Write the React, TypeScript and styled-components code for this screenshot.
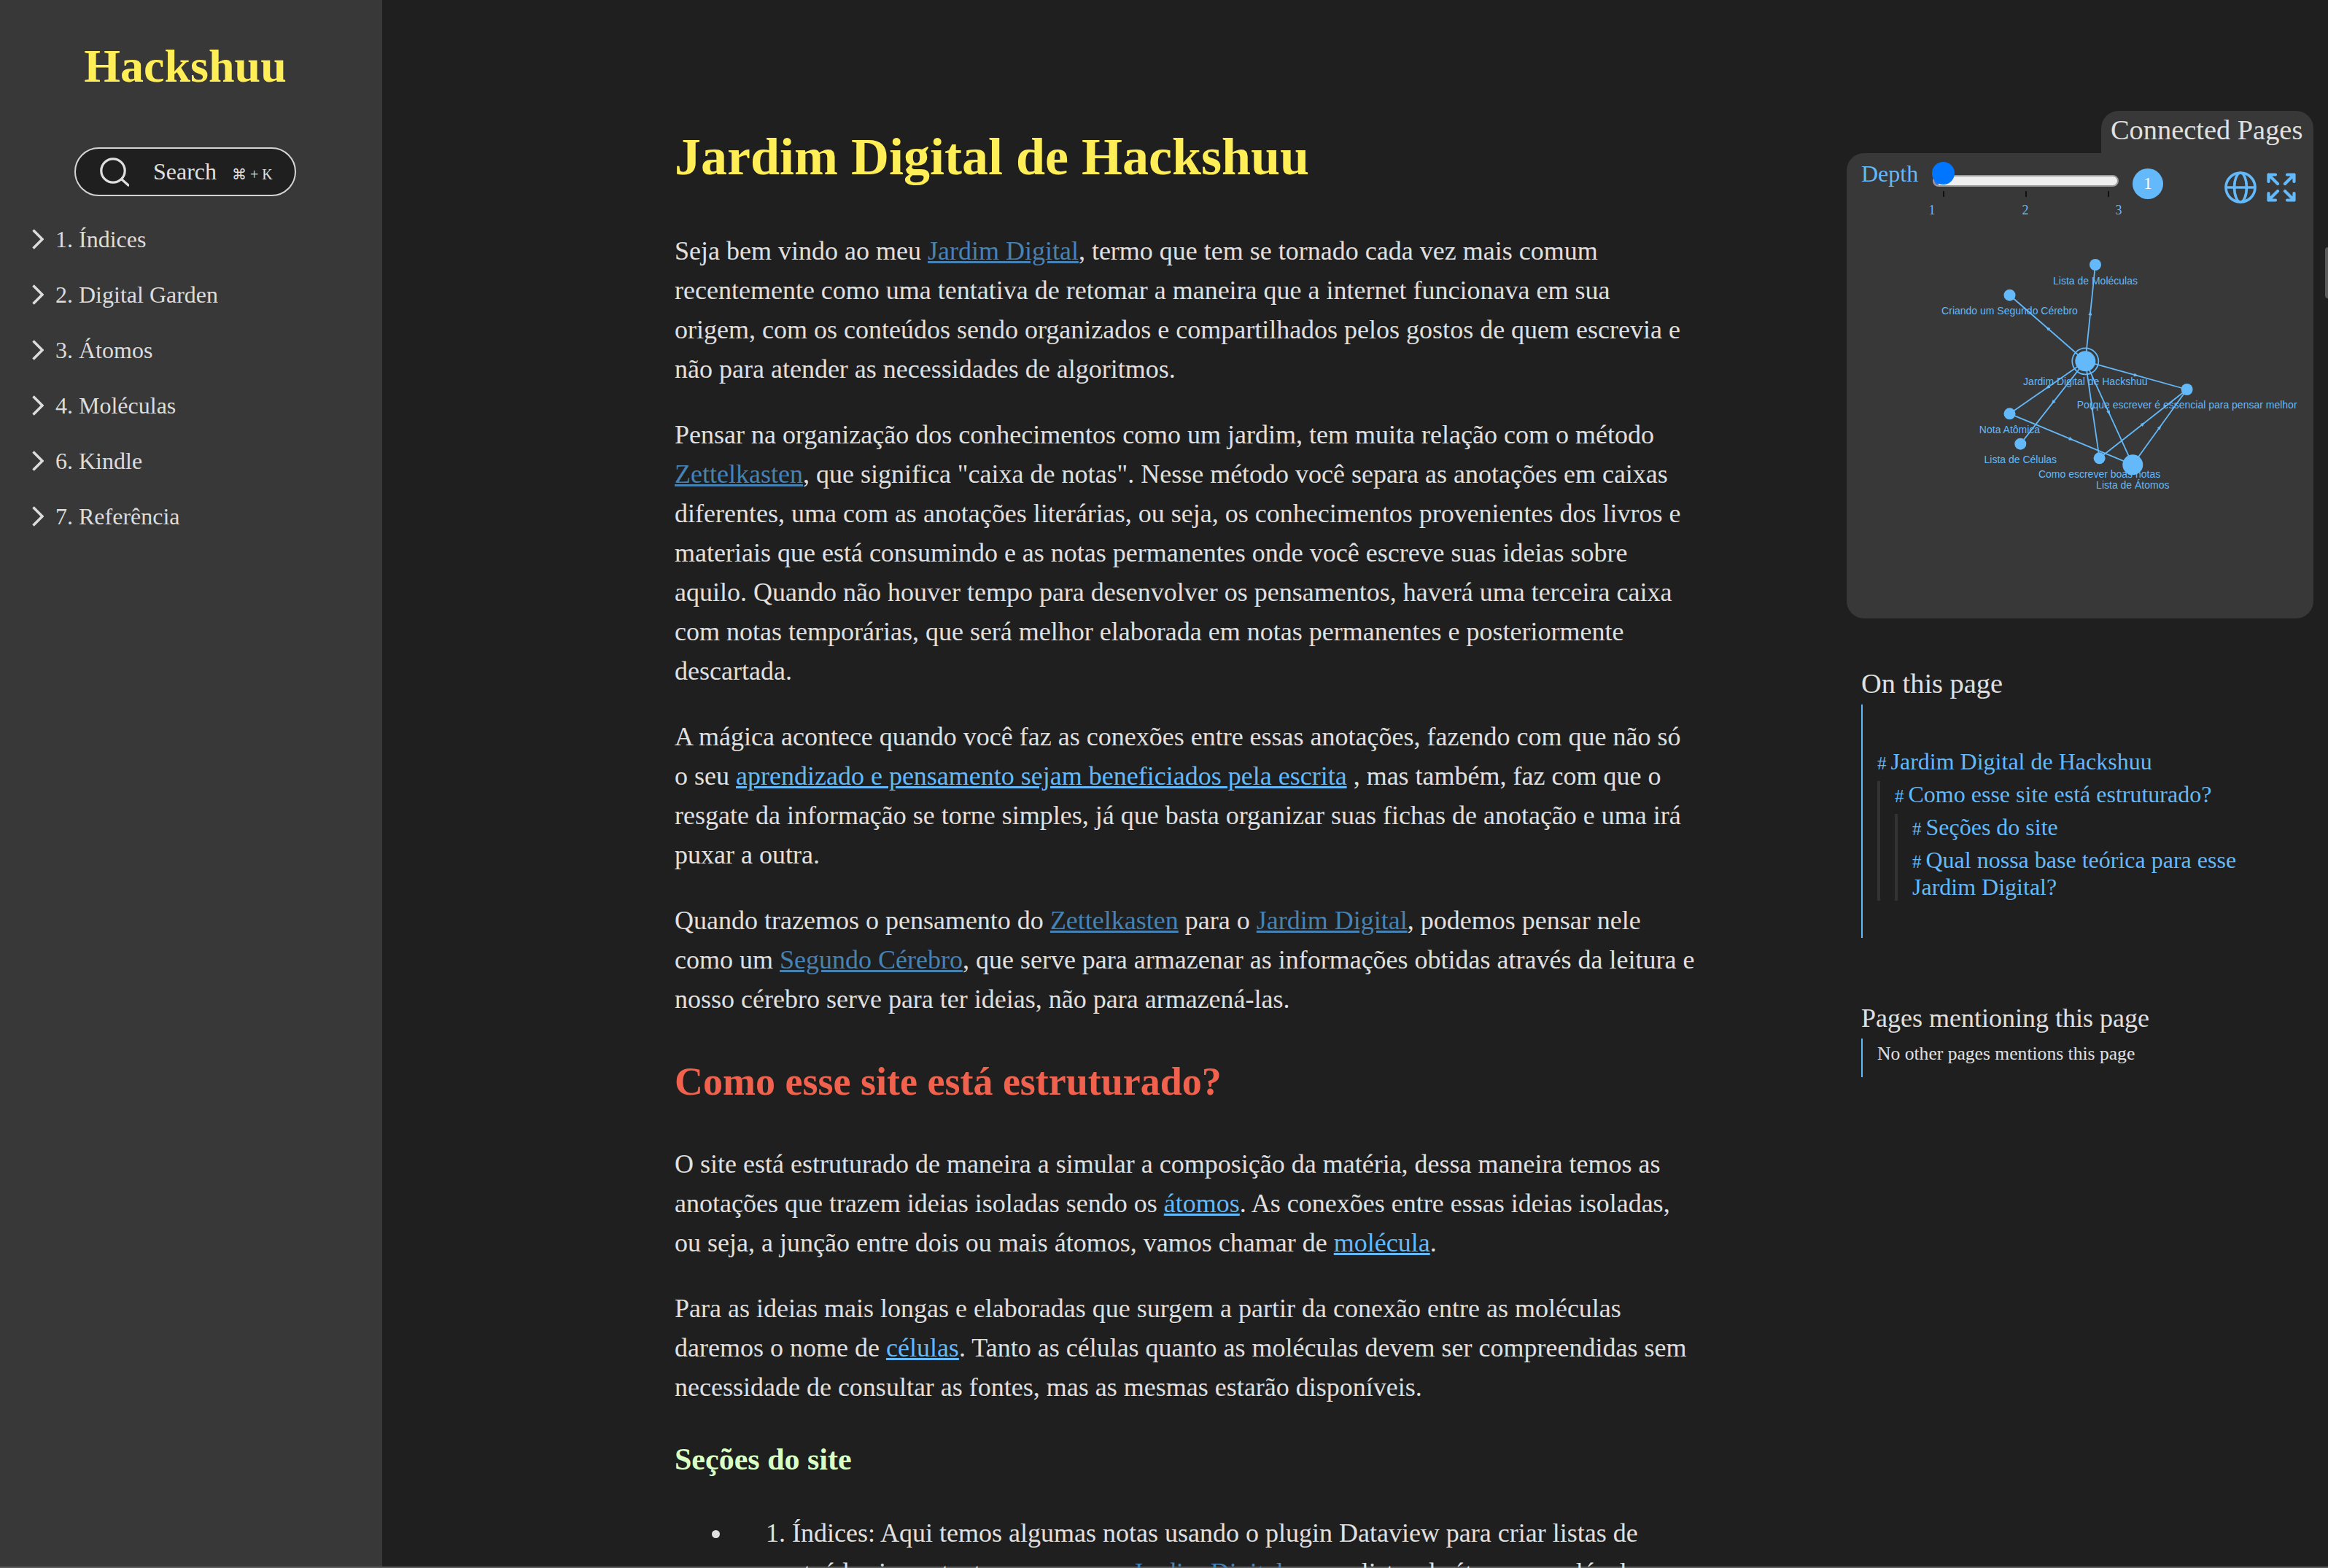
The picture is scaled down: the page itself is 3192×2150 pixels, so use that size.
import React from "react";
import styled, { createGlobalStyle } from "styled-components";

const Global = createGlobalStyle`
  html, body { margin: 0; padding: 0; height: 2150px; overflow: hidden; background: #1f1f1f; }
  * { box-sizing: border-box; }
  body { font-family: "Liberation Serif", "Times New Roman", serif; color: #e0e0e0; }
`;

const Page = styled.div`
  display: flex;
  height: 2148px;
  background: #1f1f1f;
`;

const BottomEdge = styled.div`
  height: 2px;
  background: #5c5c5c;
`;

const Sidebar = styled.aside`
  flex: 0 0 524px;
  background: #383838;
  padding-top: 54px;
`;

const Brand = styled.h1`
  margin: 0 16px 0 0;
  font-size: 64px;
  line-height: 74px;
  font-weight: 700;
  color: #ffee55;
  text-align: center;
`;

const SearchBox = styled.div`
  margin: 74px 0 21px 102px;
  width: 304px;
  height: 67px;
  display: flex;
  align-items: center;
  padding-left: 33px;
  border: 2px solid #d4d4d4;
  border-radius: 34px;
  background: #1f1f1f;
  color: #e0e0e0;
  font-size: 32px;
`;

const SearchLabel = styled.span`
  margin-left: 33px;
`;

const Shortcut = styled.span`
  margin-left: 21px;
  font-size: 20px;
  margin-top: 6px;
`;

const NavList = styled.nav`
  display: flex;
  flex-direction: column;
  padding-left: 44px;
`;

const NavItem = styled.div`
  height: 76px;
  display: flex;
  align-items: center;
  gap: 16px;
  font-size: 32px;
  color: #dcdcdc;
`;

const Main = styled.main`
  flex: 0 0 2008px;
  padding: 0 0 0 401px;
`;

const Article = styled.article`
  width: 1400px;
  font-size: 36px;
  line-height: 54px;
  color: #e0e0e0;
  p { margin: 0 0 36px; }
`;

const Title = styled.h1`
  margin: 2px 0 60px;
  padding-top: 172px;
  font-size: 72px;
  line-height: 83px;
  font-weight: 700;
  color: #ffee55;
`;

const Heading2 = styled.h2`
  margin: 54px 0 54px;
  font-size: 54px;
  line-height: 64px;
  font-weight: 700;
  color: #f0624d;
`;

const Heading3 = styled.h3`
  margin: 48px 0 50px;
  font-size: 42px;
  line-height: 48px;
  font-weight: 700;
  color: #d9ffc4;
`;

const Link = styled.a<{ $dim?: boolean }>`
  color: ${(p) => (p.$dim ? "#4682b4" : "#63b9f9")};
  text-decoration: underline;
`;

const Bullets = styled.ul`
  margin: 0;
  padding: 0 0 0 79px;
  li { padding-left: 46px; }
`;

const Rail = styled.aside`
  flex: 0 0 660px;
  padding: 152px 20px 0 0;
  display: flex;
  flex-direction: column;
`;

const GraphTab = styled.div`
  align-self: flex-end;
  width: 291px;
  height: 58px;
  background: #383838;
  border-radius: 24px 24px 0 0;
  font-size: 38.4px;
  line-height: 46px;
  padding: 3px 0 0 13px;
  color: #e0e0e0;
  white-space: nowrap;
`;

const GraphPanel = styled.section`
  position: relative;
  height: 638px;
  background: #383838;
  border-radius: 24px 0 24px 24px;
`;

const DepthLabel = styled.span`
  position: absolute;
  left: 20px;
  top: 8px;
  font-size: 32px;
  line-height: 40px;
  color: #63b9f9;
`;

const Track = styled.div`
  position: absolute;
  left: 118px;
  top: 30px;
  width: 255px;
  height: 16px;
  background: #efefef;
  border: 2px solid #9a9a9a;
  border-radius: 8px;
  overflow: hidden;
`;

const TrackFill = styled.div`
  width: 6px;
  height: 100%;
  background: #3f6fd0;
`;

const Thumb = styled.div`
  position: absolute;
  left: 117px;
  top: 12px;
  width: 31px;
  height: 31px;
  border-radius: 50%;
  background: #0075ff;
`;

const Tick = styled.i<{ $x: number }>`
  position: absolute;
  left: ${(p) => p.$x}px;
  top: 52px;
  width: 2px;
  height: 8px;
  background: #111;
`;

const TickLabel = styled.span<{ $x: number }>`
  position: absolute;
  left: ${(p) => p.$x}px;
  top: 67px;
  width: 20px;
  margin-left: -10px;
  text-align: center;
  font-size: 18px;
  line-height: 22px;
  color: #63b9f9;
`;

const Bubble = styled.div`
  position: absolute;
  left: 392px;
  top: 21px;
  width: 42px;
  height: 42px;
  border-radius: 50%;
  background: #63b9f9;
  color: #fff;
  font-size: 24px;
  line-height: 40px;
  text-align: center;
`;

const GlobeIcon = styled.svg`
  position: absolute;
  left: 518px;
  top: 25px;
  width: 44px;
  height: 44px;
`;

const ExpandIcon = styled.svg`
  position: absolute;
  left: 576px;
  top: 27px;
  width: 40px;
  height: 40px;
`;

const GraphSvg = styled.svg`
  position: absolute;
  left: 0;
  top: 0;
  width: 640px;
  height: 638px;
  text {
    font-family: "Liberation Sans", Arial, sans-serif;
    font-size: 14px;
    fill: #63b9f9;
    text-anchor: middle;
  }
`;

const Block = styled.section<{ $top: number }>`
  margin-top: ${(p) => p.$top}px;
  padding-left: 20px;
`;

const BlockTitle = styled.h3<{ $size?: number }>`
  margin: 0;
  font-size: ${(p) => p.$size ?? 38.4}px;
  line-height: 44px;
  font-weight: 400;
  color: #e0e0e0;
`;

const Toc = styled.div`
  margin-top: 7px;
  height: 320px;
  border-left: 2px solid #63b9f9;
  padding: 60px 50px 0 20px;
  font-size: 32px;
`;

const TocGroup = styled.div`
  border-left: 4px solid #333;
  padding-left: 20px;
`;

const TocItem = styled.div`
  color: #63b9f9;
  margin-bottom: 8px;
  line-height: 37px;
`;

const Hash = styled.span`
  font-size: 25px;
  line-height: 1;
  margin-right: 6px;
`;

const Mentions = styled.div`
  margin-top: 6px;
  height: 53px;
  border-left: 2px solid #63b9f9;
  padding: 6px 0 0 20px;
  font-size: 25.6px;
  line-height: 30px;
  color: #e0e0e0;
`;

const ScrollThumb = styled.div`
  position: absolute;
  right: 0;
  top: 339px;
  width: 4px;
  height: 70px;
  background: #5a5a5a;
  border-radius: 4px 0 0 4px;
`;

const nodes = [
  { x: 2873, y: 362, r: 8, l: "Lista de Moléculas", ly: 385 },
  { x: 2755.5, y: 403.7, r: 8, l: "Criando um Segundo Cérebro", ly: 426 },
  { x: 2859.3, y: 494.3, r: 14, l: "Jardim Digital de Hackshuu", ly: 523 },
  { x: 2998.6, y: 533, r: 8, l: "Porque escrever é essencial para pensar melhor", ly: 555 },
  { x: 2755.5, y: 566.3, r: 8, l: "Nota Atômica", ly: 589 },
  { x: 2770.3, y: 607.7, r: 8, l: "Lista de Células", ly: 630 },
  { x: 2878.6, y: 627.3, r: 8, l: "Como escrever boas notas", ly: 650 },
  { x: 2924.3, y: 636.3, r: 14, l: "Lista de Átomos", ly: 665 },
];
const edges: [number, number][] = [
  [2, 0], [2, 1], [2, 3], [2, 4], [2, 5], [2, 6], [2, 7], [4, 7], [6, 3], [7, 3],
];
const ox = 2532;
const oy = 209;

const Graph = () => (
  <GraphSvg viewBox="0 0 640 638">
    {edges.map(([a, b], i) => {
      const A = nodes[a];
      const B = nodes[b];
      const mx = (A.x + B.x) / 2 - ox;
      const my = (A.y + B.y) / 2 - oy;
      const ang = (Math.atan2(B.y - A.y, B.x - A.x) * 180) / Math.PI;
      return (
        <g key={i}>
          <line x1={A.x - ox} y1={A.y - oy} x2={B.x - ox} y2={B.y - oy} stroke="#63b9f9" strokeWidth="1.8" />
          <polygon points="-3,-2.5 3,0 -3,2.5" fill="#63b9f9" transform={`translate(${mx} ${my}) rotate(${ang})`} />
        </g>
      );
    })}
    <circle cx={nodes[2].x - ox} cy={nodes[2].y - oy} r="18" fill="none" stroke="#63b9f9" strokeWidth="1.8" />
    {nodes.map((n) => (
      <circle key={n.l} cx={n.x - ox} cy={n.y - oy} r={n.r} fill="#63b9f9" />
    ))}
    {nodes.map((n) => (
      <text key={n.l} x={n.x - ox} y={n.ly - oy + 4}>{n.l}</text>
    ))}
  </GraphSvg>
);

const Chevron = () => (
  <svg width="16" height="28" viewBox="0 0 16 28" fill="none" stroke="#dcdcdc" strokeWidth="3.6">
    <path d="M1.5 1.5 L14 14 L1.5 26.5" />
  </svg>
);

const SearchIcon = () => (
  <svg width="40" height="40" viewBox="0 0 40 40" fill="none" stroke="#e0e0e0" strokeWidth="3.2" strokeLinecap="round">
    <circle cx="18" cy="18" r="16.2" />
    <path d="M30 30 L39 38" />
  </svg>
);

export default function App() {
  return (
    <>
      <Global />
      <Page>
        <Sidebar>
          <Brand>Hackshuu</Brand>
          <SearchBox>
            <SearchIcon />
            <SearchLabel>Search</SearchLabel>
            <Shortcut>⌘ + K</Shortcut>
          </SearchBox>
          <NavList>
            {["1. Índices", "2. Digital Garden", "3. Átomos", "4. Moléculas", "6. Kindle", "7. Referência"].map((t) => (
              <NavItem key={t}>
                <Chevron />
                {t}
              </NavItem>
            ))}
          </NavList>
        </Sidebar>
        <Main>
          <Article>
            <Title>Jardim Digital de Hackshuu</Title>
            <p>
              Seja bem vindo ao meu <Link $dim>Jardim Digital</Link>, termo que tem se tornado cada vez mais comum
              recentemente como uma tentativa de retomar a maneira que a internet funcionava em sua origem, com os
              conteúdos sendo organizados e compartilhados pelos gostos de quem escrevia e não para atender as
              necessidades de algoritmos.
            </p>
            <p>
              Pensar na organização dos conhecimentos como um jardim, tem muita relação com o método{" "}
              <Link $dim>Zettelkasten</Link>, que significa "caixa de notas". Nesse método você separa as anotações em
              caixas diferentes, uma com as anotações literárias, ou seja, os conhecimentos provenientes dos livros e
              materiais que está consumindo e as notas permanentes onde você escreve suas ideias sobre aquilo. Quando
              não houver tempo para desenvolver os pensamentos, haverá uma terceira caixa com notas temporárias, que
              será melhor elaborada em notas permanentes e posteriormente descartada.
            </p>
            <p>
              A mágica acontece quando você faz as conexões entre essas anotações, fazendo com que não só o seu{" "}
              <Link>aprendizado e pensamento sejam beneficiados pela escrita</Link> , mas também, faz com que o resgate
              da informação se torne simples, já que basta organizar suas fichas de anotação e uma irá puxar a outra.
            </p>
            <p>
              Quando trazemos o pensamento do <Link $dim>Zettelkasten</Link> para o <Link $dim>Jardim Digital</Link>,
              podemos pensar nele como um <Link $dim>Segundo Cérebro</Link>, que serve para armazenar as informações
              obtidas através da leitura e nosso cérebro serve para ter ideias, não para armazená-las.
            </p>
            <Heading2>Como esse site está estruturado?</Heading2>
            <p>
              O site está estruturado de maneira a simular a composição da matéria, dessa maneira temos as anotações
              que trazem ideias isoladas sendo os <Link>átomos</Link>. As conexões entre essas ideias isoladas, ou
              seja, a junção entre dois ou mais átomos, vamos chamar de <Link>molécula</Link>.
            </p>
            <p>
              Para as ideias mais longas e elaboradas que surgem a partir da conexão entre as moléculas daremos o nome
              de <Link>células</Link>. Tanto as células quanto as moléculas devem ser compreendidas sem necessidade de
              consultar as fontes, mas as mesmas estarão disponíveis.
            </p>
            <Heading3>Seções do site</Heading3>
            <Bullets>
              <li>
                1. Índices: Aqui temos algumas notas usando o plugin Dataview para criar listas de conteúdos
                importantes para o meu <Link $dim>Jardim Digital</Link>, como listas de átomos, moléculas
              </li>
            </Bullets>
          </Article>
        </Main>
        <Rail>
          <GraphTab>Connected Pages</GraphTab>
          <GraphPanel>
            <DepthLabel>Depth</DepthLabel>
            <Track><TrackFill /></Track>
            <Thumb />
            <Tick $x={132} />
            <Tick $x={245} />
            <Tick $x={358} />
            <TickLabel $x={117}>1</TickLabel>
            <TickLabel $x={245}>2</TickLabel>
            <TickLabel $x={373}>3</TickLabel>
            <Bubble>1</Bubble>
            <GlobeIcon viewBox="0 0 24 24" fill="none" stroke="#63b9f9" strokeWidth="2">
              <circle cx="12" cy="12" r="10.9" />
              <path d="M1 12h22" />
              <ellipse cx="12" cy="12" rx="4.6" ry="10.9" />
            </GlobeIcon>
            <ExpandIcon viewBox="0 0 40 40" fill="none" stroke="#63b9f9" strokeWidth="4.2" strokeLinecap="round" strokeLinejoin="round">
              <path d="M2.5 12V2.5H12M2.5 2.5L15 15M28 2.5h9.5V12M37.5 2.5L25 15M2.5 28v9.5H12M2.5 37.5L15 25M28 37.5h9.5V28M37.5 37.5L25 25" />
            </ExpandIcon>
            <Graph />
          </GraphPanel>
          <Block $top={67}>
            <BlockTitle>On this page</BlockTitle>
            <Toc>
              <TocItem><Hash>#</Hash>Jardim Digital de Hackshuu</TocItem>
              <TocGroup>
                <TocItem><Hash>#</Hash>Como esse site está estruturado?</TocItem>
                <TocGroup>
                  <TocItem><Hash>#</Hash>Seções do site</TocItem>
                  <TocItem><Hash>#</Hash>Qual nossa base teórica para esse Jardim Digital?</TocItem>
                </TocGroup>
              </TocGroup>
            </Toc>
          </Block>
          <Block $top={88}>
            <BlockTitle $size={36}>Pages mentioning this page</BlockTitle>
            <Mentions>No other pages mentions this page</Mentions>
          </Block>
        </Rail>
        <ScrollThumb />
      </Page>
      <BottomEdge />
    </>
  );
}
